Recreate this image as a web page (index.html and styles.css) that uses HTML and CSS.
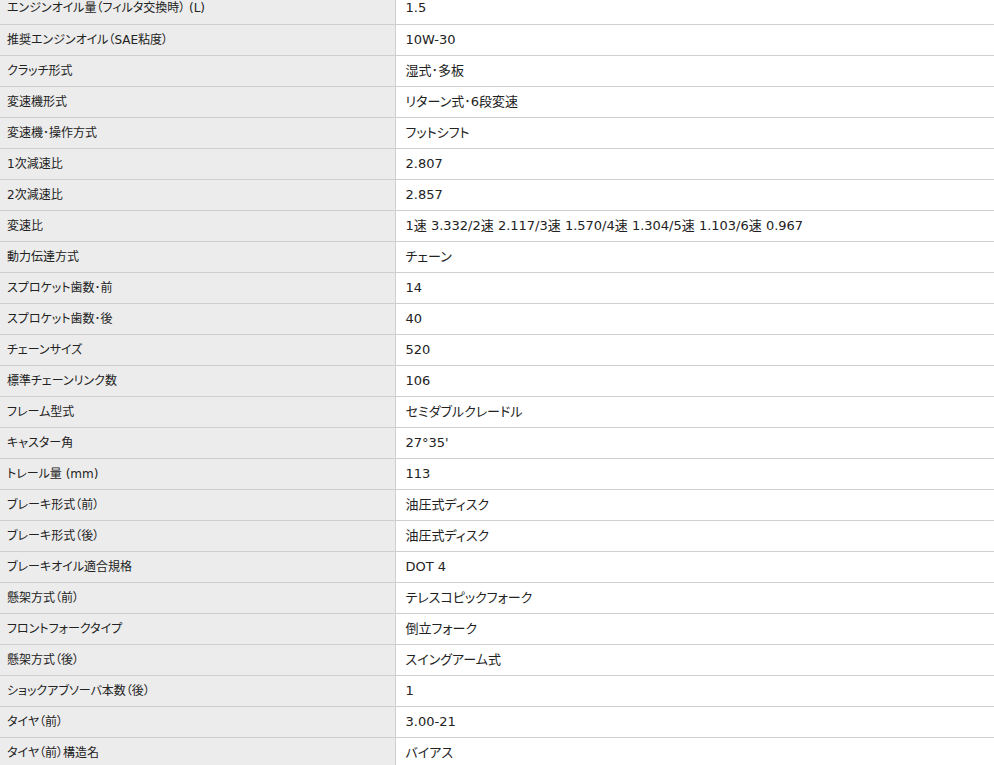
FILE: index.html
```html
<!DOCTYPE html>
<html lang="ja">
<head>
<meta charset="utf-8">
<link rel="stylesheet" href="styles.css">
</head>
<body>
<table class="spec">
<tbody>
<tr><th>エンジンオイル量（フィルタ交換時） (L)</th><td>1.5</td></tr>
<tr><th>推奨エンジンオイル（SAE粘度）</th><td>10W-30</td></tr>
<tr><th>クラッチ形式</th><td>湿式･多板</td></tr>
<tr><th>変速機形式</th><td>リターン式･6段変速</td></tr>
<tr><th>変速機･操作方式</th><td>フットシフト</td></tr>
<tr><th>1次減速比</th><td>2.807</td></tr>
<tr><th>2次減速比</th><td>2.857</td></tr>
<tr><th>変速比</th><td>1速 3.332/2速 2.117/3速 1.570/4速 1.304/5速 1.103/6速 0.967</td></tr>
<tr><th>動力伝達方式</th><td>チェーン</td></tr>
<tr><th>スプロケット歯数･前</th><td>14</td></tr>
<tr><th>スプロケット歯数･後</th><td>40</td></tr>
<tr><th>チェーンサイズ</th><td>520</td></tr>
<tr><th>標準チェーンリンク数</th><td>106</td></tr>
<tr><th>フレーム型式</th><td>セミダブルクレードル</td></tr>
<tr><th>キャスター角</th><td>27°35'</td></tr>
<tr><th>トレール量 (mm)</th><td>113</td></tr>
<tr><th>ブレーキ形式（前）</th><td>油圧式ディスク</td></tr>
<tr><th>ブレーキ形式（後）</th><td>油圧式ディスク</td></tr>
<tr><th>ブレーキオイル適合規格</th><td>DOT 4</td></tr>
<tr><th>懸架方式（前）</th><td>テレスコピックフォーク</td></tr>
<tr><th>フロントフォークタイプ</th><td>倒立フォーク</td></tr>
<tr><th>懸架方式（後）</th><td>スイングアーム式</td></tr>
<tr><th>ショックアブソーバ本数（後）</th><td>1</td></tr>
<tr><th>タイヤ（前）</th><td>3.00-21</td></tr>
<tr><th>タイヤ（前）構造名</th><td>バイアス</td></tr>
</tbody>
</table>
</body>
</html>
```

FILE: styles.css
```css
html, body {
  margin: 0;
  padding: 0;
  background: #fff;
}
body {
  font-family: "DejaVu Sans", "Noto Sans CJK JP", sans-serif;
  font-size: 12px;
  color: #222;
  overflow: hidden;
}
.spec {
  width: 1000px;
  border-collapse: collapse;
  margin-top: -7px;
  font-feature-settings: "palt";
}
.spec th,
.spec td {
  height: 31px;
  padding: 0;
  border-bottom: 1px solid #cfcfcf;
  text-align: left;
  vertical-align: middle;
  font-weight: normal;
  line-height: 16px;
  box-sizing: border-box;
}
.spec th {
  width: 395px;
  padding-left: 7px;
  background: #ececec;
  border-right: 1px solid #cfcfcf;
}
.spec td {
  padding-left: 10px;
  font-size: 13px;
  background: #fff;
}
```
